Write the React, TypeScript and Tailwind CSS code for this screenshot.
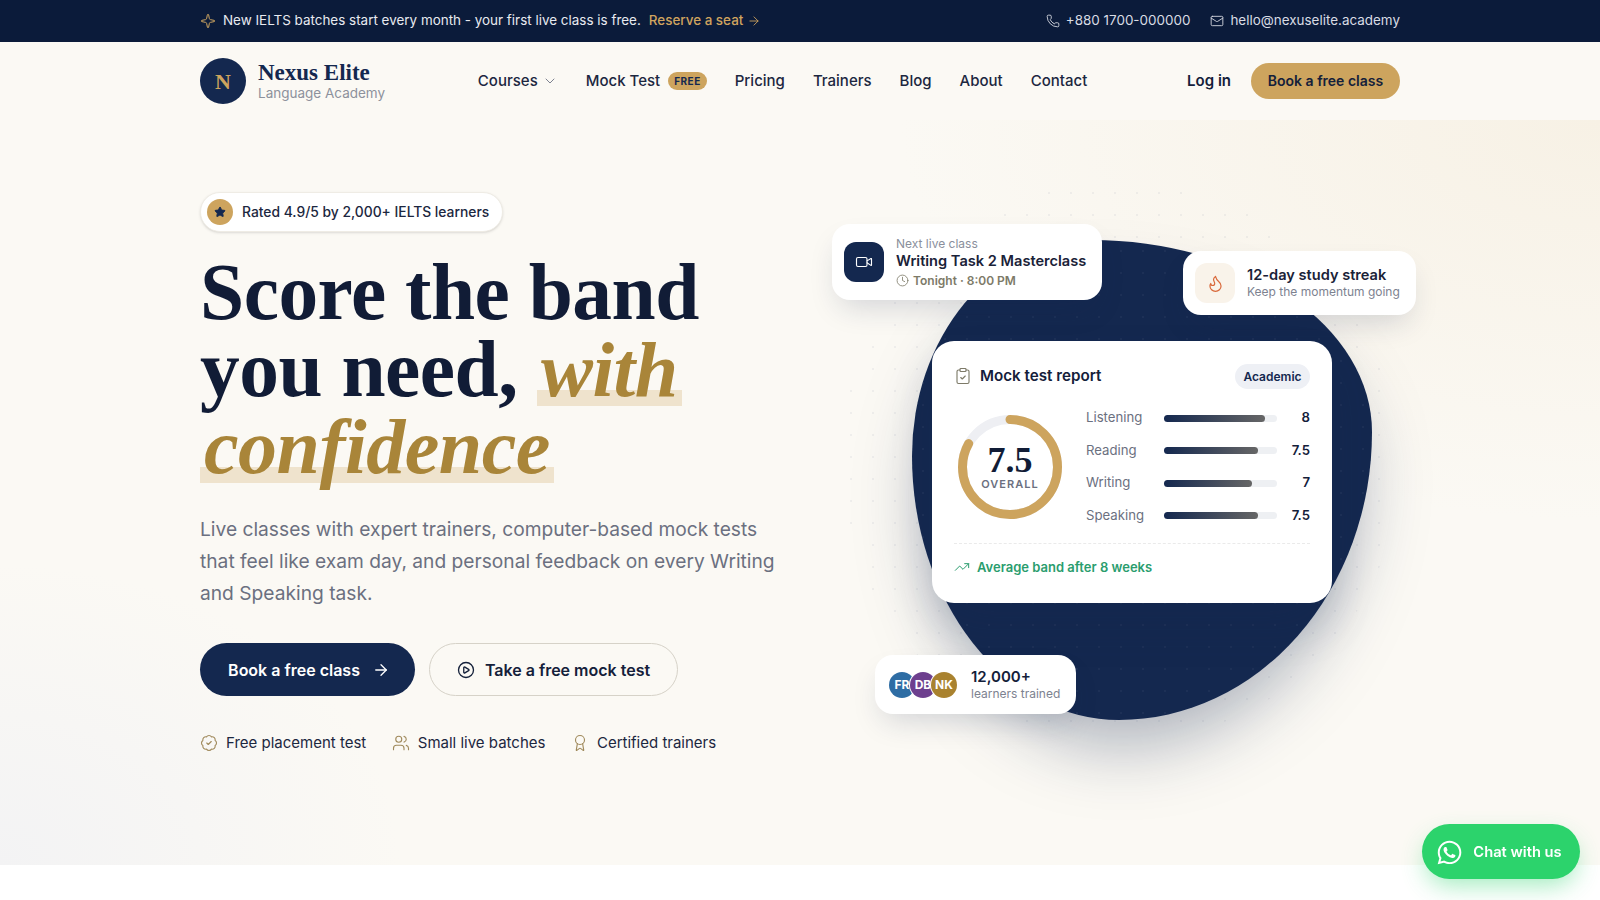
import React from 'react';
import {
  ArrowRight,
  Award,
  BadgeCheck,
  ChevronDown,
  CirclePlay,
  ClipboardCheck,
  Clock,
  Flame,
  Mail,
  Phone,
  Sparkle,
  Star,
  TrendingUp,
  Users,
  Video
} from 'lucide-react';
import { FaWhatsapp } from 'react-icons/fa';

const NAV_LINKS = ['Pricing', 'Trainers', 'Blog', 'About', 'Contact'];

const SCORES = [
  { label: 'Listening', value: '8', pct: 89 },
  { label: 'Reading', value: '7.5', pct: 83 },
  { label: 'Writing', value: '7', pct: 78 },
  { label: 'Speaking', value: '7.5', pct: 83 }
];

const PERKS = [
  { label: 'Free placement test', icon: BadgeCheck },
  { label: 'Small live batches', icon: Users },
  { label: 'Certified trainers', icon: Award }
];

const TopBar = () => (
  <div className="h-[42px] bg-[#0b1b3a] text-[13.44px] text-[#e8eaf0]">
    <div className="mx-auto flex h-full w-[1200px] items-center justify-between pb-px">
      <div className="flex items-center">
        <Sparkle className="mr-[7px] h-4 w-4 text-[#cfa661]" strokeWidth={1.5} />
        <span>New IELTS batches start every month - your first live class is free.</span>
        <span className="ml-2 flex items-center gap-1 font-medium text-[#d0a45f]">
          Reserve a seat <ArrowRight className="h-3.5 w-3.5" strokeWidth={1.5} />
        </span>
      </div>
      <div className="flex items-center gap-5 text-[#d9dce4]">
        <span className="flex items-center gap-1.5">
          <Phone className="h-3.5 w-3.5" strokeWidth={1.5} /> +880 1700-000000
        </span>
        <span className="flex items-center gap-1.5">
          <Mail className="h-3.5 w-3.5" strokeWidth={1.5} /> hello@nexuselite.academy
        </span>
      </div>
    </div>
  </div>
);

const Header = () => (
  <div className="h-[78px] bg-[#fbf9f4]">
    <div className="mx-auto flex h-full w-[1200px] items-center justify-between">
      <div className="flex w-[186px] items-center gap-3">
        <div className="flex h-[46px] w-[46px] items-center justify-center rounded-full bg-[#14284f] font-['Liberation_Serif',serif] text-[22px] font-bold text-[#cda45e]">
          N
        </div>
        <div>
          <div className="font-['Liberation_Serif',serif] text-[23px] leading-[24px] font-bold text-[#14284f]">Nexus Elite</div>
          <div className="text-[13.5px] leading-[17px] text-[#8d919c]">Language Academy</div>
        </div>
      </div>
      <nav className="mr-2 flex items-center gap-7 text-[15px] font-medium text-[#1c2740]">
        <span className="flex items-center gap-1">
          Courses <ChevronDown className="h-4 w-4 text-[#7d8290]" strokeWidth={1.5} />
        </span>
        <span className="flex items-center gap-2">
          Mock Test
          <span className="rounded-full bg-[#cda45e] px-1.5 py-0.5 text-[10px] leading-[14px] font-bold tracking-[0.5px] text-[#14284f]">FREE</span>
        </span>
        {NAV_LINKS.map((link) => (
          <span key={link}>{link}</span>
        ))}
      </nav>
      <div className="flex items-center gap-5">
        <span className="text-[15px] font-semibold text-[#14203a]">Log in</span>
        <span className="flex h-9 w-[149px] items-center justify-center rounded-full bg-[#cda45e] pb-px text-[14px] font-semibold text-[#14203a]">
          Book a free class
        </span>
      </div>
    </div>
  </div>
);

const HeroCopy = () => (
  <div className="w-[600px]">
    <div className="inline-flex h-10 items-center gap-[9px] rounded-full border border-[#efece5] bg-white pr-[13px] pl-[6px] text-[13.85px] font-medium text-[#1c2740] shadow-sm">
      <span className="flex h-[26px] w-[26px] items-center justify-center rounded-full bg-[#cda45e]">
        <Star className="h-3 w-3 fill-[#14284f] text-[#14284f]" />
      </span>
      Rated 4.9/5 by 2,000+ IELTS learners
    </div>
    <h1 className="mt-[22px] w-[580px] font-['Liberation_Serif',serif] text-[79.4px] leading-[77px] font-bold tracking-[-0.5px] text-[#111c36]">
      Score the band you need,{' '}
      <em className="bg-[linear-gradient(transparent_73%,#efe3cd_73%,#efe3cd_92%,transparent_92%)] box-decoration-clone px-1 text-[78px] text-[#a98539]">with confidence</em>
    </h1>
    <p className="mt-[28px] w-[580px] text-[19.2px] leading-[32px] text-[#6b7080]">
      Live classes with expert trainers, computer-based mock tests that feel like exam day, and personal feedback on every Writing and Speaking task.
    </p>
    <div className="mt-[34px] flex items-center gap-[14px]">
      <span className="flex h-[53px] w-[215px] items-center justify-center gap-3 rounded-full bg-[#14284f] pl-[3px] text-[16px] font-semibold text-white">
        Book a free class <ArrowRight className="h-[18px] w-[18px]" strokeWidth={1.75} />
      </span>
      <span className="flex h-[53px] w-[249px] items-center justify-center gap-2.5 rounded-full border border-[#d6d2c8] text-[16px] font-semibold text-[#14203a]">
        <CirclePlay className="h-[18px] w-[18px]" strokeWidth={1.75} /> Take a free mock test
      </span>
    </div>
    <div className="mt-[36px] flex items-center gap-[25.5px] text-[15px] text-[#1c2740]">
      {PERKS.map(({ label, icon: Icon }) => (
        <span key={label} className="flex items-center gap-2">
          <Icon className="h-[18px] w-[18px] text-[#a08a5c]" strokeWidth={1.5} />
          {label}
        </span>
      ))}
    </div>
  </div>
);

const ScoreRing = () => (
  <div className="relative h-[104px] w-[104px] shrink-0">
    <svg viewBox="0 0 104 104" className="h-full w-full -rotate-90">
      <circle cx="52" cy="52" r="47.5" fill="none" stroke="#eeeff3" strokeWidth="9" />
      <circle cx="52" cy="52" r="47.5" fill="none" stroke="#cda45e" strokeWidth="9" strokeLinecap="round" strokeDasharray="248 299" />
    </svg>
    <div className="absolute inset-0 flex flex-col items-center justify-center">
      <span className="font-['Liberation_Serif',serif] text-[36px] leading-[34px] font-bold text-[#111c36]">7.5</span>
      <span className="text-[11px] leading-[14px] font-semibold tracking-[1px] text-[#6b7080]">OVERALL</span>
    </div>
  </div>
);

const ReportCard = () => (
  <div className="absolute top-[149px] left-[132px] h-[262px] w-[400px] rounded-[22px] bg-white px-[22px] pt-[23px] shadow-[0_24px_50px_-12px_rgba(20,40,79,0.28)]">
    <div className="flex items-center justify-between">
      <span className="flex items-center gap-2 text-[15.2px] font-semibold text-[#14203a]">
        <ClipboardCheck className="h-[18px] w-[18px] text-[#7d7a68]" strokeWidth={1.5} />
        Mock test report
      </span>
      <span className="flex h-[25px] w-[75px] items-center justify-center rounded-full bg-[#eef0f5] text-[12px] font-semibold text-[#14284f]">Academic</span>
    </div>
    <div className="mt-[20px] flex items-center">
      <div className="ml-[4px]"><ScoreRing /></div>
      <div className="ml-[24px] flex flex-1 flex-col gap-[14.5px]">
        {SCORES.map((s) => (
          <div key={s.label} className="flex h-[18px] items-center text-[13.2px]">
            <span className="w-[78px] text-[#6b7080]">{s.label}</span>
            <div className="h-[7px] w-[113px] rounded-full bg-[#eef0f3]">
              <div className="h-full rounded-full bg-[linear-gradient(90deg,#14284f,#666666)]" style={{ width: `${s.pct}%` }} />
            </div>
            <span className="flex-1 text-right font-semibold text-[#14203a]">{s.value}</span>
          </div>
        ))}
      </div>
    </div>
    <div className="mt-[18px] border-t border-dashed border-[#eaeaea]" />
    <div className="mt-[14px] flex items-center gap-[7px] text-[13px] font-semibold text-[#2a9d6e]">
      <TrendingUp className="h-[16px] w-[16px]" strokeWidth={1.5} />
      Average band after 8 weeks
    </div>
  </div>
);

const HeroVisual = () => (
  <div className="relative h-[560px] flex-1">
    <div className="absolute -top-[10px] left-[40px] h-[560px] w-[560px] rounded-full bg-[radial-gradient(rgba(20,40,79,0.05)_1px,transparent_1px)] bg-[size:22px_22px]" />
    <div className="absolute top-[48px] left-[112px] h-[480px] w-[460px] rounded-[39%_61%_55%_45%/45%_40%_60%_55%] bg-[#14284f] shadow-[0_40px_70px_-15px_rgba(20,40,79,0.35)]">
      <div className="h-full w-full rounded-[inherit] bg-[radial-gradient(rgba(255,255,255,0.04)_1px,transparent_1px)] bg-[size:22px_22px]" />
    </div>

    <div className="absolute top-[32px] left-[32px] flex h-[76px] w-[270px] items-center gap-3 rounded-[18px] bg-white pl-[12px] shadow-[0_14px_30px_-8px_rgba(20,40,79,0.18)]">
      <span className="flex h-10 w-10 items-center justify-center rounded-[12px] bg-[#14284f]">
        <Video className="h-[18px] w-[18px] text-white" strokeWidth={1.5} />
      </span>
      <div>
        <div className="text-[12px] leading-[15px] text-[#8a8f9c]">Next live class</div>
        <div className="text-[14.6px] leading-[20px] font-semibold text-[#1a2238]">Writing Task 2 Masterclass</div>
        <div className="mt-px flex items-center gap-1 text-[12px] leading-[17px] font-semibold text-[#7d7a68]">
          <Clock className="h-[13px] w-[13px]" strokeWidth={1.5} /> Tonight · 8:00 PM
        </div>
      </div>
    </div>

    <div className="absolute top-[59px] left-[383px] flex h-[64px] w-[233px] items-center gap-3 rounded-[18px] bg-white pl-[12px] shadow-[0_14px_30px_-8px_rgba(20,40,79,0.18)]">
      <span className="flex h-10 w-10 items-center justify-center rounded-[12px] bg-[#f9f3ea]">
        <Flame className="h-[19px] w-[19px] text-[#d9683a]" strokeWidth={1.5} />
      </span>
      <div>
        <div className="text-[14.6px] leading-[18px] font-semibold text-[#1a2238]">12-day study streak</div>
        <div className="text-[12px] leading-[16px] text-[#7d8290]">Keep the momentum going</div>
      </div>
    </div>

    <ReportCard />

    <div className="absolute top-[463px] left-[75px] flex h-[59px] w-[201px] items-center rounded-[18px] bg-white pl-[14px] shadow-[0_14px_30px_-8px_rgba(20,40,79,0.18)]">
      <div className="flex text-[12px] font-bold text-white">
        <span className="flex h-[26px] w-[26px] items-center justify-center rounded-full bg-[#2e6da4] ring-1 ring-white">FR</span>
        <span className="-ml-[5px] flex h-[26px] w-[26px] items-center justify-center rounded-full bg-[#6d3f8e] ring-1 ring-white">DB</span>
        <span className="-ml-[5px] flex h-[26px] w-[26px] items-center justify-center rounded-full bg-[#a9822f] ring-1 ring-white">NK</span>
      </div>
      <div className="ml-[14px]">
        <div className="text-[15px] leading-[19px] font-semibold text-[#14203a]">12,000+</div>
        <div className="text-[12px] leading-[16px] text-[#7d8290]">learners trained</div>
      </div>
    </div>
  </div>
);

export default function App() {
  return (
    <div className="min-h-screen overflow-hidden bg-white font-['Inter',sans-serif]">
      <TopBar />
      <Header />
      <section className="h-[745px] bg-[#fbf9f4] bg-[radial-gradient(ellipse_700px_400px_at_100%_0%,#f7f1e5,transparent),radial-gradient(ellipse_400px_300px_at_0%_100%,#f3f3f4,transparent)]">
        <div className="mx-auto flex w-[1200px] pt-[72px]">
          <HeroCopy />
          <HeroVisual />
        </div>
      </section>
      <div className="fixed right-5 bottom-[21px] flex h-[55px] w-[158px] items-center justify-center gap-2.5 rounded-full bg-[#2cd36c] pt-px pr-1 text-[14.7px] font-semibold text-white shadow-[0_10px_24px_-4px_rgba(44,211,108,0.45)]">
        <FaWhatsapp className="h-[27px] w-[27px] shrink-0" />
        Chat with us
      </div>
    </div>
  );
}
